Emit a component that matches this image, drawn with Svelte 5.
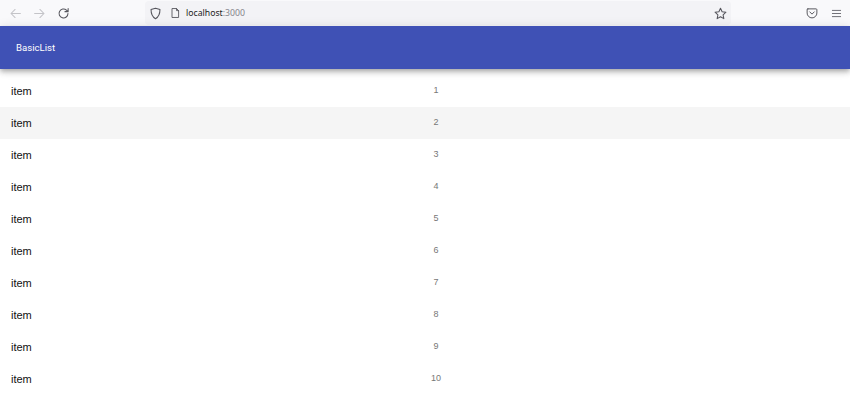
<script>
  const rows = Array.from({ length: 10 }, (_, i) => i + 1);
</script>

<div class="page">
  <header class="browser">
    <div class="nav">
      <svg class="ic" viewBox="0 0 16 16"><path class="faint" d="M14 8H2.500M7.500 3 2.500 8l5 5" /></svg>
      <svg class="ic" viewBox="0 0 16 16"><path class="faint" d="M2 8h11.500M8.500 3l5 5-5 5" /></svg>
      <svg class="ic" viewBox="0 0 16 16"><path d="M13.500 8A5.500 5.500 0 1 1 11.600 3.800L13.500 5.500M13.700 1.800v3.900H9.800" /></svg>
    </div>
    <div class="url">
      <svg class="ic shield" viewBox="0 0 16 16"><path d="M8 1.500 2.500 3.200c0 5 .8 8.800 5.500 11.300 4.700-2.500 5.500-6.300 5.500-11.300z" /></svg>
      <svg class="ic page-ic" viewBox="0 0 16 16"><path d="M3.500 1.500h6l3 3v10h-9zM9.500 1.500v3h3" /></svg>
      <span class="addr">localhost<span class="port">:3000</span></span>
      <svg class="ic star" viewBox="0 0 16 16"><path d="m8 1.500 2 4.300 4.700.6-3.500 3.200.9 4.700L8 12l-4.100 2.300.9-4.700L1.300 6.400 6 5.800z" /></svg>
    </div>
    <div class="tools">
      <svg class="ic pocket" viewBox="0 0 16 16"><path d="M2.500 2.500h11c.6 0 1 .4 1 1V8a6.500 6.500 0 0 1-13 0V3.500c0-.6.400-1 1-1zM5 6.500l3 3 3-3" /></svg>
      <svg class="ic menu" viewBox="0 0 16 16"><path d="M2 3.500h12M2 8h12M2 12.500h12" /></svg>
    </div>
  </header>

  <div class="appbar">BasicList</div>

  <ul class="list">
    {#each rows as n}
      <li class:hover={n === 2}>
        <span class="name">item</span>
        <span class="num">{n}</span>
      </li>
    {/each}
  </ul>
</div>

<style>
  :global(body) {
    margin: 0;
    background: #fff;
    overflow: hidden;
  }
  .page {
    width: 850px;
    height: 409px;
    overflow: hidden;
    font-family: "Liberation Sans", Arial, sans-serif;
  }
  .browser {
    height: 26px;
    background: #f9f9fb;
    display: flex;
    align-items: center;
    box-sizing: border-box;
  }
  .nav {
    display: flex;
    gap: 11px;
    width: 145px;
    padding-left: 9px;
    box-sizing: border-box;
  }
  .ic {
    width: 13px;
    height: 13px;
    flex: none;
    fill: none;
    stroke: #55555c;
    stroke-width: 1.300;
    stroke-linejoin: round;
    stroke-linecap: round;
  }
  .ic .faint {
    stroke: #c4c4c8;
  }
  .url {
    width: 586px;
    height: 24px;
    background: #f3f3f6;
    border-radius: 4px;
    display: flex;
    align-items: center;
    padding: 0 4px;
    box-sizing: border-box;
  }
  .shield {
    margin-right: 8px;
  }
  .page-ic {
    width: 11px;
    height: 12px;
    margin-right: 5px;
  }
  .addr {
    font-family: "Noto Sans", "Open Sans", sans-serif;
    font-size: 8.700px;
    color: #222;
    flex: 1;
  }
  .port {
    color: #85858b;
  }
  .tools {
    display: flex;
    gap: 13px;
    margin-left: 75px;
  }
  .pocket {
    width: 12px;
    height: 12px;
  }
  .menu {
    width: 11px;
    height: 11px;
    stroke-width: 1.200;
    margin-top: 1px;
  }
  .appbar {
    height: 43px;
    background: #3f51b5;
    color: #fff;
    display: flex;
    align-items: center;
    padding-left: 16px;
    font-family: Roboto, sans-serif;
    font-size: 9.600px;
    box-shadow: 0 2px 4px -1px rgba(0, 0, 0, .2), 0 4px 5px 0 rgba(0, 0, 0, .14), 0 1px 10px 0 rgba(0, 0, 0, .12);
    position: relative;
  }
  .list {
    list-style: none;
    margin: 5.500px 0 0;
    padding: 0;
  }
  li {
    height: 32px;
    display: grid;
    grid-template-columns: 414px 22px;
    align-items: center;
    padding-left: 11px;
    box-sizing: border-box;
  }
  li.hover {
    background: #f5f5f5;
  }
  .name {
    font-size: 11px;
    color: #111;
  }
  .num {
    font-size: 9px;
    line-height: 12px;
    padding-bottom: 2px;
    color: #777;
    justify-self: center;
  }
</style>
